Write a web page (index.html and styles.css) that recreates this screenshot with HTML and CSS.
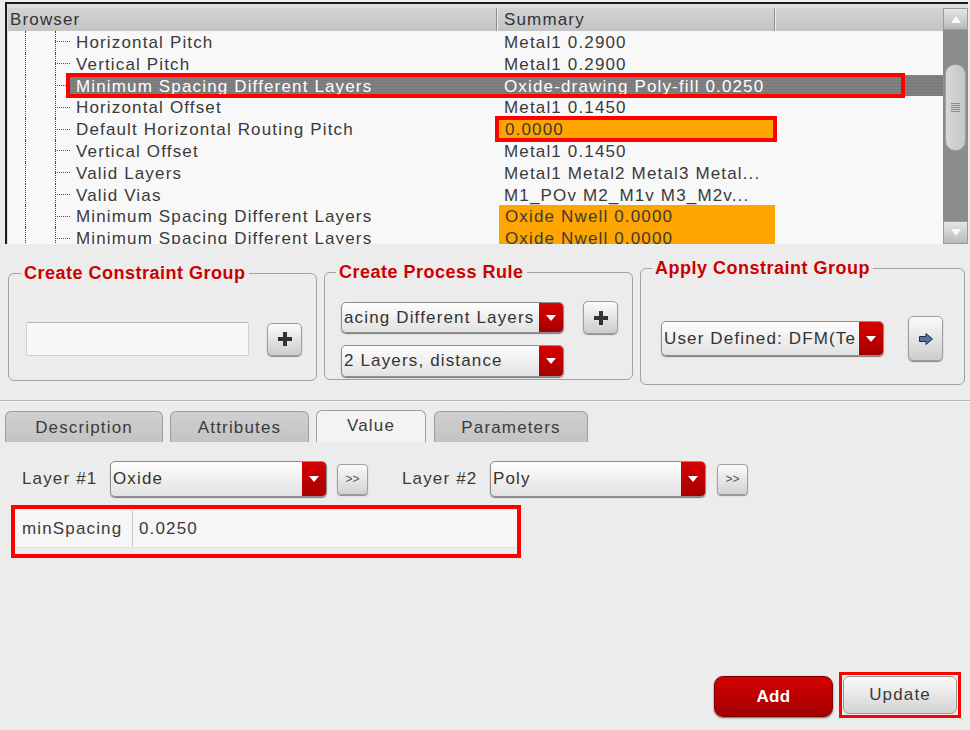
FILE: index.html
```html
<!DOCTYPE html>
<html>
<head>
<meta charset="utf-8">
<link rel="stylesheet" href="styles.css">
</head>
<body>
<div class="app">
  <div class="browser">
    <div class="grid">
      <div class="hdr">
        <div class="hc c1">Browser</div>
        <div class="hc c2 pad">Summary</div>
        <div class="hc c3"></div>
      </div>
      <div class="rows">
        <div class="row"><div class="c1 tree"><span class="ind"></span><span class="v1"></span><span class="v2"></span><span class="txt">Horizontal Pitch</span></div><div class="c2 pad">Metal1 0.2900</div><div class="c3"></div></div>
        <div class="row"><div class="c1 tree"><span class="ind"></span><span class="v1"></span><span class="v2"></span><span class="txt">Vertical Pitch</span></div><div class="c2 pad">Metal1 0.2900</div><div class="c3"></div></div>
        <div class="row sel"><div class="c1 tree"><span class="ind"></span><span class="v1"></span><span class="v2"></span><span class="txt">Minimum Spacing Different Layers</span></div><div class="c2 pad">Oxide-drawing Poly-fill 0.0250</div><div class="c3"></div></div>
        <div class="row"><div class="c1 tree"><span class="ind"></span><span class="v1"></span><span class="v2"></span><span class="txt">Horizontal Offset</span></div><div class="c2 pad">Metal1 0.1450</div><div class="c3"></div></div>
        <div class="row"><div class="c1 tree"><span class="ind"></span><span class="v1"></span><span class="v2"></span><span class="txt">Default Horizontal Routing Pitch</span></div><div class="c2 pad warn boxed">0.0000</div><div class="c3"></div></div>
        <div class="row"><div class="c1 tree"><span class="ind"></span><span class="v1"></span><span class="v2"></span><span class="txt">Vertical Offset</span></div><div class="c2 pad">Metal1 0.1450</div><div class="c3"></div></div>
        <div class="row"><div class="c1 tree"><span class="ind"></span><span class="v1"></span><span class="v2"></span><span class="txt">Valid Layers</span></div><div class="c2 pad">Metal1 Metal2 Metal3 Metal...</div><div class="c3"></div></div>
        <div class="row"><div class="c1 tree"><span class="ind"></span><span class="v1"></span><span class="v2"></span><span class="txt">Valid Vias</span></div><div class="c2 pad">M1_POv M2_M1v M3_M2v...</div><div class="c3"></div></div>
        <div class="row"><div class="c1 tree"><span class="ind"></span><span class="v1"></span><span class="v2"></span><span class="txt">Minimum Spacing Different Layers</span></div><div class="c2 pad warn">Oxide Nwell 0.0000</div><div class="c3"></div></div>
        <div class="row"><div class="c1 tree"><span class="ind"></span><span class="v1"></span><span class="v2"></span><span class="txt">Minimum Spacing Different Layers</span></div><div class="c2 pad warn">Oxide Nwell 0.0000</div><div class="c3"></div></div>
        <div class="mark-row"></div>
      </div>
    </div>
    <div class="vscroll">
      <div class="sb-btn"><span class="tri-up"></span></div>
      <div class="sb-track"><div class="thumb"><span class="grip"></span></div></div>
      <div class="sb-btn down"><span class="tri-down"></span></div>
    </div>
  </div>

  <div class="groups">
    <fieldset class="grp g1">
      <legend>Create Constraint Group</legend>
      <div class="grp-row">
        <div class="textin"></div>
        <div class="sqbtn"><svg width="16" height="16" viewBox="0 0 16 16"><path d="M6 1h4v5h5v4h-5v5H6v-5H1V6h5z" fill="#333"/></svg></div>
      </div>
    </fieldset>
    <fieldset class="grp g2">
      <legend>Create Process Rule</legend>
      <div class="grp-row top">
        <div class="combos">
          <div class="combo c-rule"><span class="val">acing Different Layers</span><span class="dd"></span></div>
          <div class="combo c-rule"><span class="val">2 Layers, distance</span><span class="dd"></span></div>
        </div>
        <div class="sqbtn"><svg width="16" height="16" viewBox="0 0 16 16"><path d="M6 1h4v5h5v4h-5v5H6v-5H1V6h5z" fill="#333"/></svg></div>
      </div>
    </fieldset>
    <fieldset class="grp g3">
      <legend>Apply Constraint Group</legend>
      <div class="grp-row">
        <div class="combo c-apply"><span class="val">User Defined: DFM(Te</span><span class="dd"></span></div>
        <div class="sqbtn tall"><svg width="16" height="14" viewBox="0 0 16 14"><path d="M1.5 4.5h6.5V1.5l6.5 5.5-6.5 5.5V9.5H1.5z" fill="#56749a" stroke="#1e2c40" stroke-width="1"/></svg></div>
      </div>
    </fieldset>
  </div>

  <div class="sep"></div>

  <div class="tabs">
    <div class="tab t-desc">Description</div>
    <div class="tab t-attr">Attributes</div>
    <div class="tab t-val on">Value</div>
    <div class="tab t-par">Parameters</div>
  </div>

  <div class="tabbody">
    <div class="layer-row">
      <span class="lbl">Layer #1</span>
      <div class="combo c-layer"><span class="val">Oxide</span><span class="dd"></span></div>
      <div class="mini">&gt;&gt;</div>
      <span class="lbl l2">Layer #2</span>
      <div class="combo c-layer2"><span class="val">Poly</span><span class="dd"></span></div>
      <div class="mini">&gt;&gt;</div>
    </div>
    <div class="field-wrap">
      <div class="field">
        <span class="f-lbl">minSpacing</span>
        <span class="f-val">0.0250</span>
      </div>
    </div>
    <div class="actions">
      <div class="btn add">Add</div>
      <div class="hl"><div class="btn upd">Update</div></div>
    </div>
  </div>
</div>
</body>
</html>
```

FILE: styles.css
```css
* { box-sizing: border-box; }
body { margin: 0; background: #ececec; }
.app {
  width: 970px; height: 730px; overflow: hidden;
  background: #ececec;
  font-family: "Liberation Sans", Arial, sans-serif;
  font-size: 17px; letter-spacing: 1.15px; color: #3a3a3a;
}

/* ---------- browser ---------- */
.browser {
  margin: 2px 2px 0 5px; height: 242px;
  border-top: 2px solid #1c1c1c; border-left: 2px solid #1c1c1c;
  padding: 4px 0 0 1px; background: #dedede;
  display: flex;
}
.grid { flex: 1; display: flex; flex-direction: column; background: #f8f8f8; overflow: hidden; }
.hdr { display: flex; height: 23px; flex: none; background: linear-gradient(#d3d3d3, #c4c4c4); }
.hc { line-height: 23px; padding-left: 2px; color: #333; border-right: 1px solid #8c8c8c; box-shadow: 1px 0 0 #efefef; white-space: nowrap; }
.c1 { width: 489px; flex: none; }
.c2 { width: 278px; flex: none; white-space: nowrap; }
.c3 { flex: 1; }
.pad { padding-left: 7px; }
.hdr .c3 { border-right: none; box-shadow: none; }

.rows { flex: 1; position: relative; overflow: hidden; }
.row { display: flex; height: 21.8px; line-height: 23px; }
.tree { display: flex; }
.ind { width: 17px; flex: none; }
.v1 { width: 30px; flex: none; border-left: 1px dotted #444; }
.v2 {
  width: 15px; flex: none; border-left: 1px dotted #444;
  background: linear-gradient(90deg, #555 1px, transparent 1px) 1px 50% / 2px 1px repeat-x;
}
.txt { flex: 1; padding-left: 6px; white-space: nowrap; }
.sel .txt, .sel .c2, .sel .c3 {
  background: repeating-linear-gradient(#808080 0 2px, #787878 2px 3px);
  color: #fff;
}
.warn { background: linear-gradient(90deg, transparent 2px, #ffa500 2px); padding-left: 8px; }
.boxed { outline: 4px solid #f00; outline-offset: -2px; }
.mark-row {
  position: absolute; left: 58px; top: 42px; width: 839px; height: 25px;
  border: 4px solid #f00;
}

.vscroll { width: 25px; flex: none; display: flex; flex-direction: column; background: #8c8c8c; }
.sb-btn {
  height: 22px; flex: none; display: flex; align-items: center; justify-content: center;
  background: linear-gradient(#e6e6e6, #b9b9b9); border: 1px solid #9a9a9a;
}
.sb-btn.down { height: 23px; }
.tri-up { border-left: 5px solid transparent; border-right: 5px solid transparent; border-bottom: 7px solid #fafafa; }
.tri-down { border-left: 5px solid transparent; border-right: 5px solid transparent; border-top: 7px solid #fafafa; }
.sb-track { flex: 1; padding: 34px 2px 0 2px; }
.thumb {
  height: 87px; border-radius: 10px; border: 1px solid #9e9e9e;
  background: linear-gradient(90deg, #d8d8d8, #c6c6c6);
  display: flex; align-items: center; justify-content: center;
}
.grip {
  width: 9px; height: 10px;
  background: repeating-linear-gradient(#8a8a8a 0 1px, transparent 1px 2px);
}

/* ---------- groups ---------- */
.groups { display: flex; gap: 7px; padding-left: 8px; margin-top: 13px; align-items: flex-start; }
.grp { margin: 0; min-width: 0; border: 1px solid #a2a2a2; border-radius: 6px; }
.grp legend {
  font-weight: bold; font-size: 18px; letter-spacing: 0.5px; color: #cc0000;
  line-height: 22px; padding: 0 3px;
}
.g1 { width: 309px; height: 119px; margin-top: 5px; padding: 38px 0 0 17px; }
.g1 legend { margin-left: -5px; }
.g2 { width: 309px; height: 119px; margin-top: 4px; padding: 19px 0 0 16px; }
.g2 legend { margin-left: -5px; }
.g3 { width: 325px; height: 128px; padding: 37px 0 0 20px; }
.g3 legend { margin-left: -9px; }
.grp-row { display: flex; align-items: center; }
.grp-row.top { align-items: flex-start; }
.textin {
  width: 223px; height: 34px; margin-right: 18px;
  background: #f7f7f7; border: 1px solid #cfcfcf; border-top-color: #b5b5b5; border-radius: 2px;
}
.sqbtn {
  width: 35px; height: 33px; flex: none;
  border: 1px solid #9c9c9c; border-radius: 5px;
  background: linear-gradient(#fbfbfb, #cdcdcd);
  box-shadow: 0 1px 1px #8a8a8a;
  display: flex; align-items: center; justify-content: center;
}
.sqbtn.tall { height: 45px; }
.g2 .sqbtn { margin-left: 19px; margin-top: -1px; }
.combos { display: flex; flex-direction: column; gap: 12px; }

.combo {
  display: flex; flex: none; height: 31px;
  border: 1px solid #8e8e8e; border-radius: 5px; overflow: hidden;
  background: linear-gradient(#fdfdfd, #e2e2e2);
  box-shadow: 0 1px 1px #7a7a7a;
}
.combo .val { flex: 1; min-width: 0; padding-left: 2px; white-space: nowrap; overflow: hidden; display: flex; align-items: center; color: #333; }
.combo .dd {
  width: 24px; flex: none; display: flex; align-items: center; justify-content: center;
  background: linear-gradient(#d90000, #a50000);
}
.combo .dd::before {
  content: ""; border-left: 5px solid transparent; border-right: 5px solid transparent; border-top: 6px solid #fff;
}
.c-rule { width: 223px; }
.c-rule + .c-rule { height: 32px; }
.c-apply { width: 223px; height: 35px; margin-right: 24px; }

/* ---------- tabs ---------- */
.sep { height: 2px; margin-top: 15px; border-top: 1px solid #b6b6b6; border-bottom: 1px solid #fafafa; }
.tabs { display: flex; align-items: flex-end; padding-left: 5px; margin-top: 8px; height: 32px; }
.tab {
  height: 31px; line-height: 31px; text-align: center;
  border: 1px solid #9e9e9e; border-bottom: none; border-radius: 6px 6px 0 0;
  background: linear-gradient(#d0d0d0, #c3c3c3); color: #3a3a3a;
  margin-right: 7px;
}
.tab.on { height: 32px; line-height: 29px; background: #f3f3f3; margin-right: 8px; }
.t-desc { width: 158px; }
.t-attr { width: 139px; }
.t-val { width: 110px; }
.t-par { width: 154px; }

.layer-row { display: flex; align-items: center; height: 36px; margin-top: 19px; padding-left: 22px; }
.lbl { width: 88px; flex: none; white-space: nowrap; }
.c-layer { width: 217px; height: 36px; margin-right: 10px; }
.c-layer2 { width: 216px; height: 36px; margin-right: 11px; }
.mini {
  width: 31px; height: 31px; flex: none; margin-right: 34px;
  border: 1px solid #a0a0a0; border-radius: 4px;
  background: linear-gradient(#fafafa, #d2d2d2);
  box-shadow: 0 1px 1px #8e8e8e;
  font-size: 12px; letter-spacing: 0; color: #555;
  display: flex; align-items: center; justify-content: center;
}

.field-wrap {
  width: 510px; height: 53px; margin: 8px 0 0 11px;
  border: 4px solid #f00; padding: 1px 0 0 0;
}
.field { display: flex; height: 38px; background: #f6f6f6; border-bottom: 1px solid #e2e2e2; }
.f-lbl { width: 118px; flex: none; padding-left: 7px; border-right: 1px solid #c9c9c9; display: flex; align-items: center; }
.f-val { padding-left: 6px; display: flex; align-items: center; }

.actions { display: flex; justify-content: flex-end; align-items: flex-start; padding-right: 9px; margin-top: 114px; }
.btn { display: flex; align-items: center; justify-content: center; }
.add {
  width: 119px; height: 41px; border-radius: 9px; margin-top: 4px; margin-right: 6px;
  border: 1px solid #7a0000;
  background: linear-gradient(#d60000, #a20000);
  box-shadow: 0 1px 2px #666;
  color: #fff; font-weight: bold; letter-spacing: 0.3px;
}
.hl { border: 3px solid #f00; padding: 1px; }
.upd {
  width: 114px; height: 38px; border-radius: 6px;
  border: 1px solid #9a9a9a;
  background: linear-gradient(#fafafa, #d3d3d3);
  color: #3a3a3a;
}
```
